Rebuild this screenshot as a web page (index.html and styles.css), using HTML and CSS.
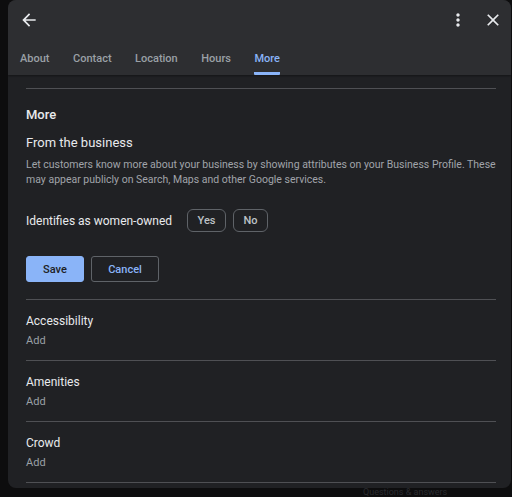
FILE: index.html
```html
<!DOCTYPE html>
<html lang="en">
<head>
    <meta charset="UTF-8">
    <title>Edit profile - More</title>
    <link rel="stylesheet" href="styles.css">
</head>
<body>

<div class="backdrop">
    <div class="ghost ghost-qa">Questions &amp; answers</div>
</div>

<div class="dialog">
    <div class="header">
        <div class="top-row">
            <button class="icon-btn" aria-label="Back">
                <svg width="20" height="20" viewBox="0 0 24 24"><path fill="#e8eaed" d="M20 11H7.83l5.59-5.59L12 4l-8 8 8 8 1.41-1.41L7.83 13H20v-2z"/></svg>
            </button>
            <div class="spacer"></div>
            <button class="icon-btn" aria-label="More options">
                <svg width="20" height="20" viewBox="0 0 24 24"><path fill="#e8eaed" d="M12 8c1.1 0 2-.9 2-2s-.9-2-2-2-2 .9-2 2 .9 2 2 2zm0 2c-1.1 0-2 .9-2 2s.9 2 2 2 2-.9 2-2-.9-2-2-2zm0 6c-1.1 0-2 .9-2 2s.9 2 2 2 2-.9 2-2-.9-2-2-2z"/></svg>
            </button>
            <button class="icon-btn close" aria-label="Close">
                <svg width="20" height="20" viewBox="0 0 24 24"><path fill="#e8eaed" d="M19 6.41L17.59 5 12 10.59 6.41 5 5 6.41 10.59 12 5 17.59 6.41 19 12 13.41 17.59 19 19 17.59 13.41 12z"/></svg>
            </button>
        </div>
        <div class="tabs">
            <div class="tab">About</div>
            <div class="tab">Contact</div>
            <div class="tab">Location</div>
            <div class="tab">Hours</div>
            <div class="tab active">More</div>
        </div>
    </div>

    <div class="content">
        <div class="divider"></div>

        <div class="section-title">More</div>
        <div class="sub-title">From the business</div>
        <p class="desc">Let customers know more about your business by showing attributes on your Business Profile. These may appear publicly on Search, Maps and other Google services.</p>

        <div class="attr-row">
            <span class="attr-label">Identifies as women-owned</span>
            <button class="chip">Yes</button>
            <button class="chip">No</button>
        </div>

        <div class="actions">
            <button class="btn btn-save">Save</button>
            <button class="btn btn-cancel">Cancel</button>
        </div>

        <div class="divider"></div>
        <div class="group">
            <div class="group-title">Accessibility</div>
            <div class="group-add">Add</div>
        </div>
        <div class="divider"></div>
        <div class="group">
            <div class="group-title">Amenities</div>
            <div class="group-add">Add</div>
        </div>
        <div class="divider"></div>
        <div class="group">
            <div class="group-title">Crowd</div>
            <div class="group-add">Add</div>
        </div>
        <div class="divider"></div>
    </div>
</div>

</body>
</html>
```

FILE: styles.css
```css
body {
    margin: 0;
    padding: 0;
    background: #0d0d0e;
    font-family: Roboto, "Noto Sans", sans-serif;
    height: 497px;
    overflow: hidden;
}

.backdrop {
    position: absolute;
    top: 0;
    left: 0;
    width: 512px;
    height: 497px;
}

.ghost {
    position: absolute;
    color: #2a2b2e;
    font-size: 9px;
    line-height: 9px;
}

.ghost-qa {
    left: 363px;
    top: 488px;
}

.dialog {
    position: relative;
    margin-left: 8px;
    width: 503px;
    height: 488px;
    background: #202124;
    border-radius: 8px;
    overflow: hidden;
}

.header {
    background: #2d2e31;
    height: 75px;
    box-shadow: 0 1px 2px rgba(0, 0, 0, 0.4);
}

.top-row {
    display: flex;
    align-items: center;
    height: 40px;
    padding: 0 8px 0 11px;
}

.spacer {
    flex: 1;
}

.icon-btn {
    background: none;
    border: none;
    padding: 0;
    width: 20px;
    height: 20px;
    display: flex;
}

.icon-btn.close {
    margin-left: 15px;
}

.tabs {
    display: flex;
    gap: 23.5px;
    height: 35px;
    padding-left: 12px;
}

.tab {
    font-size: 11px;
    color: #9aa0a6;
    line-height: 37px;
    height: 35px;
    box-sizing: border-box;
    font-weight: 500;
}

.tab.active {
    color: #8ab4f8;
    border-bottom: 3px solid #8ab4f8;
    border-radius: 1px;
}

.content {
    padding: 13px 15px 0 18px;
}

.divider {
    height: 1px;
    background: #4f5054;
}

.section-title {
    margin-top: 17px;
    font-size: 13px;
    color: #e8eaed;
    font-weight: 500;
    line-height: 18px;
}

.sub-title {
    margin-top: 10px;
    font-size: 13px;
    color: #e8eaed;
    line-height: 18px;
}

.desc {
    margin: 5px 0 0;
    font-size: 10.5px;
    line-height: 15px;
    color: #a0a4aa;
}

.attr-row {
    margin-top: 22px;
    display: flex;
    align-items: center;
}

.attr-label {
    font-size: 12px;
    color: #e8eaed;
    margin-right: 15px;
}

.chip {
    background: none;
    border: 1px solid #5f6368;
    border-radius: 6px;
    color: #bdc1c6;
    font-family: Roboto, sans-serif;
    font-size: 11px;
    font-weight: 500;
    height: 23px;
    padding: 0 9.5px;
    margin-right: 7px;
}

.actions {
    margin-top: 24px;
    margin-bottom: 17px;
    display: flex;
    gap: 7px;
}

.btn {
    font-family: Roboto, sans-serif;
    font-size: 11px;
    font-weight: 500;
    height: 26px;
    border-radius: 3px;
    padding: 0;
}

.btn-save {
    width: 58px;
    background: #8ab4f8;
    border: 1px solid #8ab4f8;
    color: #202124;
}

.btn-cancel {
    width: 68px;
    background: none;
    border: 1px solid #5f6368;
    color: #8ab4f8;
}

.group {
    padding: 12px 0 11px;
}

.group-title {
    font-size: 12px;
    color: #e8eaed;
    line-height: 18px;
}

.group-add {
    margin-top: 3px;
    font-size: 11px;
    color: #9aa0a6;
    line-height: 16px;
}
```
